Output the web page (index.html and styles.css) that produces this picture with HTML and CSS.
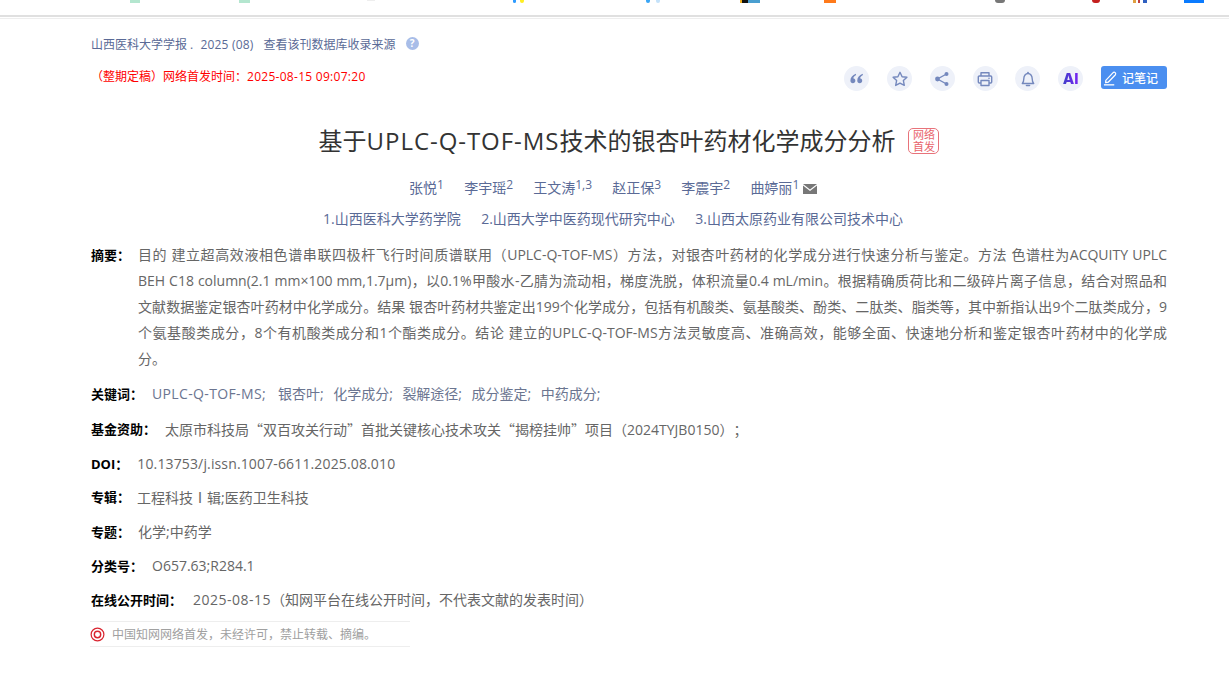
FILE: index.html
```html
<!DOCTYPE html>
<html lang="zh-CN">
<head>
<meta charset="utf-8">
<title>基于UPLC-Q-TOF-MS技术的银杏叶药材化学成分分析</title>
<link rel="stylesheet" href="styles.css">
</head>
<body>
<header class="topstrip">
  <div class="slivers">
    <i class="s s1"></i><i class="s s2"></i><i class="s s3"></i><i class="s s4"></i><i class="s s5"></i><i class="s s6"></i><i class="s s7"></i><i class="s s8"></i><i class="s s9"></i><i class="s s10"></i><i class="s s11"></i><i class="s s12"></i><i class="s s13"></i>
  </div>
</header>
<main class="page">
  <div class="source">
    <span>山西医科大学学报 . <span class="year">2025 (08)</span></span>
    <span>查看该刊数据库收录来源</span>
    <span class="help">?</span>
  </div>
  <div class="toolrow">
    <div class="pubtime">（整期定稿）网络首发时间：<span class="stamp">2025-08-15 09:07:20</span></div>
    <div class="tools">
      <span class="tool"><svg viewBox="0 0 16 16" width="15" height="15"><path d="M7.200 2.800C3.800 4.200 1.500 6.700 1.500 10c0 1.800 1.100 3 2.600 3s2.700-1.100 2.700-2.600S5.700 7.800 4.400 7.800c.4-1.300 1.500-2.500 3.200-3.500zM14.500 2.800C11.100 4.200 8.800 6.700 8.800 10c0 1.800 1.100 3 2.600 3s2.700-1.100 2.700-2.600-1.100-2.600-2.400-2.600c.4-1.300 1.500-2.500 3.200-3.500z" fill="#7488bd"/></svg></span>
      <span class="tool"><svg viewBox="0 0 16 16" width="16" height="16"><path d="M8 1.300l2.100 4.400 4.800.6-3.500 3.300.9 4.800L8 12.100l-4.300 2.300.9-4.800L1.100 6.300l4.800-.6z" fill="none" stroke="#7488bd" stroke-width="1.400" stroke-linejoin="round"/></svg></span>
      <span class="tool"><svg viewBox="0 0 16 16" width="16" height="16"><path d="M12.500 3L3.500 8l9 5" fill="none" stroke="#7488bd" stroke-width="1.400"/><circle cx="12.500" cy="3" r="2" fill="#7488bd"/><circle cx="3.500" cy="8" r="2.400" fill="#7488bd"/><circle cx="12.500" cy="13" r="2" fill="#7488bd"/></svg></span>
      <span class="tool"><svg viewBox="0 0 16 16" width="16" height="16"><path d="M4 5V1.800h8V5M4 12H2.300a1 1 0 0 1-1-1V6a1 1 0 0 1 1-1h11.400a1 1 0 0 1 1 1v5a1 1 0 0 1-1 1H12M4 9.500h8v5H4z" fill="none" stroke="#7488bd" stroke-width="1.400" stroke-linejoin="round"/><circle cx="12" cy="7.300" r=".8" fill="#7488bd"/></svg></span>
      <span class="tool"><svg viewBox="0 0 16 16" width="16" height="16"><path d="M2.300 12.500h11.400c-1-1-1.500-2-1.500-4.700 0-3-1.800-5.300-4.200-5.300S3.800 4.800 3.800 7.800c0 2.700-.5 3.700-1.500 4.700z" fill="none" stroke="#7488bd" stroke-width="1.400" stroke-linejoin="round"/><path d="M6.500 14.500h3" stroke="#7488bd" stroke-width="1.600" stroke-linecap="round"/><circle cx="8" cy="1.600" r=".9" fill="#7488bd"/></svg></span>
      <span class="tool"><span class="ai">AI</span></span>
      <span class="note"><svg viewBox="0 0 16 16" width="15" height="16"><path d="M3 10.500L10.500 2.500c.8-.8 1.800-.8 2.500-.2s.7 1.700 0 2.500L5.500 12.500 2.800 13z" fill="none" stroke="#fff" stroke-width="1.300" stroke-linejoin="round"/><path d="M1 15.300h11" stroke="#fff" stroke-width="1.400"/></svg>记笔记</span>
    </div>
  </div>
  <h1 class="title"><span>基于<span class="lat">UPLC-Q-TOF-MS</span>技术的银杏叶药材化学成分分析</span><span class="badge">网络<br>首发</span></h1>
  <div class="authors">
    <span>张悦<sup>1</sup></span>
    <span>李宇瑶<sup>2</sup></span>
    <span>王文涛<sup>1,3</sup></span>
    <span>赵正保<sup>3</sup></span>
    <span>李震宇<sup>2</sup></span>
    <span>曲婷丽<sup>1</sup> <svg class="mail" viewBox="0 0 14 10" width="14" height="10"><path d="M0 0h14L7 5.500zM0 1.500V10h14V1.500L7 7z" fill="#777"/></svg></span>
  </div>
  <div class="orgs">
    <span>1.山西医科大学药学院</span>
    <span>2.山西大学中医药现代研究中心</span>
    <span>3.山西太原药业有限公司技术中心</span>
  </div>
  <div class="abstract">
    <b class="label">摘要：</b>
    <p>
      <span class="line">目的 建立超高效液相色谱串联四极杆飞行时间质谱联用（UPLC-Q-TOF-MS）方法，对银杏叶药材的化学成分进行快速分析与鉴定。方法 色谱柱为ACQUITY UPLC</span>
      <span class="line">BEH C18 column(2.1 mm×100 mm,1.7μm)，以0.1%甲酸水-乙腈为流动相，梯度洗脱，体积流量0.4 mL/min。根据精确质荷比和二级碎片离子信息，结合对照品和</span>
      <span class="line">文献数据鉴定银杏叶药材中化学成分。结果 银杏叶药材共鉴定出199个化学成分，包括有机酸类、氨基酸类、酚类、二肽类、脂类等，其中新指认出9个二肽类成分，9</span>
      <span class="line">个氨基酸类成分，8个有机酸类成分和1个酯类成分。结论 建立的UPLC-Q-TOF-MS方法灵敏度高、准确高效，能够全面、快速地分析和鉴定银杏叶药材中的化学成</span>
      <span class="line-end">分。</span>
    </p>
  </div>
  <div class="row keywords"><b>关键词：</b><span class="blue"><span class="kw kw-lat">UPLC-Q-TOF-MS;</span><span class="kw">银杏叶;</span><span class="kw">化学成分;</span><span class="kw">裂解途径;</span><span class="kw">成分鉴定;</span><span class="kw">中药成分;</span></span></div>
  <div class="row fund"><b>基金资助：</b><span class="fund-text">太原市科技局<span class="q">“</span>双百攻关行动<span class="q">”</span>首批关键核心技术攻关<span class="q">“</span>揭榜挂帅<span class="q">”</span>项目（2024TYJB0150）；</span></div>
  <div class="row"><b>DOI：</b><span class="doi">10.13753/j.issn.1007-6611.2025.08.010</span></div>
  <div class="row row-tight"><b>专辑：</b><span>工程科技<span class="q">Ⅰ</span>辑;医药卫生科技</span></div>
  <div class="row row-close"><b>专题：</b><span>化学;中药学</span></div>
  <div class="row"><b>分类号：</b><span>O657.63;R284.1</span></div>
  <div class="row online"><b>在线公开时间：</b><span><span class="date">2025-08-15</span>（知网平台在线公开时间，不代表文献的发表时间）</span></div>
  <div class="notice"><svg viewBox="0 0 16 16" width="15" height="15"><circle cx="8" cy="8" r="6.800" fill="none" stroke="#d9242f" stroke-width="1.300"/><circle cx="8" cy="8" r="3.400" fill="none" stroke="#d9242f" stroke-width="1.500"/></svg>中国知网网络首发，未经许可，禁止转载、摘编。</div>
</main>
</body>
</html>
```
FILE: styles.css
```css
* { box-sizing: border-box; }
html, body { margin: 0; padding: 0; background: #fff; }
body {
  font-family: "Open Sans", "Noto Sans CJK SC", sans-serif;
  font-size: 14px;
  color: #666;
  height: 674px;
  overflow: hidden;
  text-spacing-trim: space-all;
}

/* top strip: the cut-off bottoms of the bookmark icons and two rules */
.topstrip { height: 19px; border-bottom: 1px solid #eee; }
.slivers { display: flex; align-items: flex-start; height: 17px; border-bottom: 2px solid #e0e0e0; }
.s { display: block; height: 3px; flex: none; }
.s1 { width: 10px; margin-left: 130px; background: #b4e6cf; }
.s2 { width: 11px; margin-left: 99px; background: #b4e6cf; }
.s3 { width: 8px; height: 1px; margin-left: 117px; background: #eee; }
.s4 { width: 3px; margin-left: 138px; background: #2f9bff; border-radius: 0 0 2px 2px; }
.s5 { width: 4px; margin-left: 4px; background: #ffee22; border-radius: 0 0 2px 2px; }
.s6 { width: 4px; margin-left: 122px; background: #39a5f5; border-radius: 0 0 2px 2px; }
.s7 { width: 4px; margin-left: 6px; background: #c4e2fa; border-radius: 0 0 2px 2px; }
.s8 { width: 20px; margin-left: 80px; background: linear-gradient(90deg, #f0b020 0 10%, #111 10% 40%, #4a9fd0 40%); }
.s9 { width: 12px; margin-left: 64px; background: #ff7a1a; }
.s10 { width: 10px; margin-left: 159px; background: #777; border-radius: 0 0 5px 5px; }
.s11 { width: 8px; margin-left: 87px; background: #c4201f; border-radius: 0 0 4px 4px; }
.s12 { width: 14px; margin-left: 33px; background: linear-gradient(90deg, #e0a040 0 20%, #fff 20% 35%, #c04040 35% 50%, #fff 50% 70%, #3060c0 70%); }
.s13 { width: 20px; margin-left: 37px; background: #0a7bff; }

.page { width: 1076px; margin-left: 91px; }

.source {
  display: flex; align-items: center; gap: 10px;
  margin-top: 16px; height: 18px;
  font-size: 12px; color: #5a6a96;
}
.year { letter-spacing: .2px; margin-left: 4px; }
.help {
  width: 13px; height: 13px; border-radius: 50%;
  background: #a8bde8; color: #fff; font-size: 10px; font-weight: 700;
  display: flex; align-items: center; justify-content: center;
  margin-top: -2px;
}

.toolrow { display: flex; justify-content: space-between; align-items: flex-start; margin-top: 7px; }
.pubtime { font-size: 12px; color: #f00; margin-top: 8px; line-height: 18px; }
.stamp { letter-spacing: .28px; }
.tools { display: flex; gap: 17.800px; margin-top: 6px; }
.tool {
  width: 25px; height: 25px; border-radius: 50%;
  background: #eef1f9;
  display: flex; align-items: center; justify-content: center;
}
.ai {
  font-family: "Inter", sans-serif; font-weight: 800; font-size: 15px;
  background: linear-gradient(90deg, #3f3fc8, #7a22f5);
  -webkit-background-clip: text; background-clip: text;
  color: transparent;
}
.note {
  width: 66px; height: 23px; border-radius: 3px; padding-left: 2px;
  background: #4b8ff0; color: #fff; font-size: 12px; font-weight: 500;
  display: flex; align-items: center; gap: 4px;
}

.title {
  margin: 32px 0 0;
  font-size: 24px; font-weight: 400; color: #333; line-height: 36px;
  display: flex; justify-content: center; align-items: center; gap: 13px;
}
.lat { letter-spacing: .95px; }
.badge {
  width: 31px; height: 26px; border: 1px solid #e8737a; border-radius: 5px;
  color: #e8646c; font-size: 11px; line-height: 12px; text-align: center;
  display: block;
}

.authors {
  display: flex; justify-content: center; gap: 20.200px; padding-right: 32px;
  margin-top: 17px; height: 24px; line-height: 24px; color: #5a6a96;
}
sup { font-size: 12px; line-height: 0; vertical-align: 4px; }
.mail { vertical-align: -1px; }
.orgs {
  display: flex; justify-content: center; gap: 20.500px; padding-right: 32px;
  margin-top: 7px; line-height: 24px; color: #5a6a96;
}

b { color: #000; font-weight: 700; font-size: 13px; }
.abstract { display: flex; margin-top: 11px; line-height: 26px; }
.label { width: 47px; flex: none; }
.abstract p { margin: 0; flex: 1; color: #666; }
.line { display: block; text-align: justify; text-align-last: justify; }
.line-end { display: block; }

.row { display: flex; gap: 9px; margin-top: 8px; line-height: 26px; }
.row b { white-space: nowrap; }
.keywords { margin-top: 9px; }
.fund { margin-top: 9px; }
.row-tight { margin-top: 7px; gap: 7px; }
.row-close { gap: 8px; }
.online { gap: 11px; }
.blue { color: #6b7590; }
.fund-text { color: #666; }
.kw { margin-right: 9.500px; }
.kw-lat { letter-spacing: .36px; margin-right: 12px; }
.q { font-family: "Noto Sans CJK SC", sans-serif; }
.doi { letter-spacing: .14px; }
.date { letter-spacing: .5px; }

.notice {
  width: 320px; height: 26px; margin-top: 8px; margin-left: -1px;
  border-top: 1px solid #eee; border-bottom: 1px solid #eee;
  display: flex; align-items: center; gap: 7px; font-size: 12px; color: #a0a0a0;
}
```
